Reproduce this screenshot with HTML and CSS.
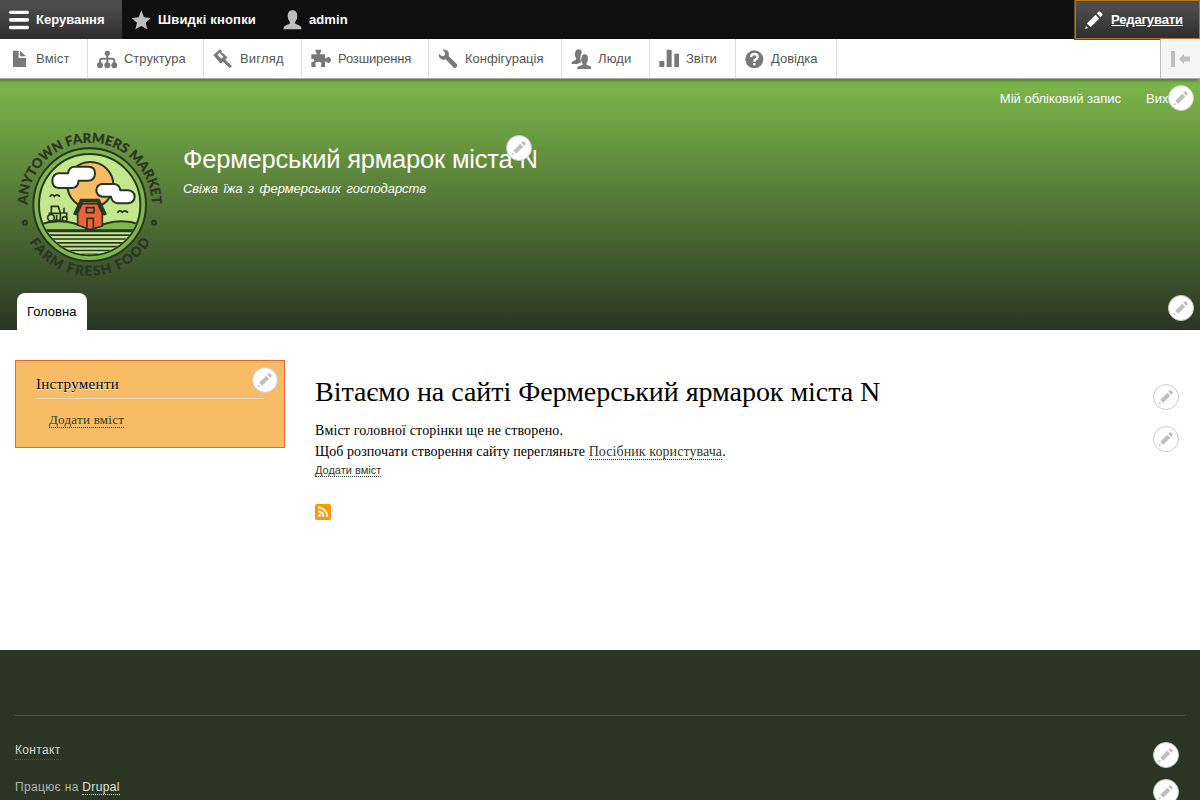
FILE: index.html
```
<!DOCTYPE html>
<html lang="uk">
<head>
<meta charset="utf-8">
<title>Фермерський ярмарок міста N</title>
<link rel="stylesheet" href="styles.css">
</head>
<body>
<svg class="defs" width="0" height="0">
  <symbol id="pencil" viewBox="0 0 16 16">
    <path d="M14.545 3.042l-1.586-1.585c-.389-.389-1.025-.389-1.414 0l-1.293 1.293 3 3 1.293-1.293c.389-.389.389-1.026 0-1.415z"/>
    <rect x="5.129" y="3.8" transform="matrix(-.707 -.707 .707 -.707 6.189 20.064)" width="4.243" height="9.899"/>
    <path d="M.908 14.775c-.087.262.055.397.316.312l2.001-.667-1.65-1.646-.667 2.001z"/>
  </symbol>
</svg>

<div class="toolbar">
  <nav class="bar">
    <a class="tab active"><svg class="icon" viewBox="0 0 60 60"><path d="M4 2H56Q60 2 60 7Q60 12 56 12H4Q0 12 0 7Q0 2 4 2ZM4 24H56Q60 24 60 29Q60 35 56 35H4Q0 35 0 29Q0 24 4 24ZM4 47H56Q60 47 60 52Q60 58 56 58H4Q0 58 0 52Q0 47 4 47Z"/></svg>Керування</a>
    <a class="tab shortcuts"><svg class="icon gray" viewBox="0 0 60 60"><path d="M31 1L39 22L59 24L44 38L49 58L31 48L13 58L18 38L2 24L23 22Z"/></svg>Швидкі кнопки</a>
    <a class="tab user"><svg class="icon gray" viewBox="0 0 60 60"><path d="M4 58Q4 49 12 46L23 41Q25 37 22 33Q17 27 17 18Q17 1 31 1Q46 1 46 18Q46 27 41 33Q38 37 40 41L51 46Q59 49 59 58Z"/></svg>admin</a>
    <a class="tab edit active"><svg class="icon" viewBox="0 0 16 16"><use href="#pencil"/></svg>Редагувати</a>
  </nav>
  <nav class="tray">
    <a class="item w-content"><svg class="icon" viewBox="0 0 60 60"><path d="M12 5H29V27H51V54H12ZM33 5L51 22H33Z"/></svg>Вміст</a>
    <a class="item w-structure"><svg class="icon" viewBox="0 0 60 60"><circle cx="31" cy="13" r="8"/><circle cx="9" cy="49" r="9"/><circle cx="31" cy="49" r="9"/><circle cx="52" cy="49" r="9"/><path class="line" d="M31 13V48M9 48V35Q9 29 15 29H46Q52 29 52 35V48"/></svg>Структура</a>
    <a class="item w-appearance"><svg class="icon" viewBox="0 0 60 60"><path fill-rule="evenodd" d="M1 18L21 1L27 7L24 11L30 13L43 25L37 32L57 51L50 58L30 38L23 44ZM13 17L25 29L31 23L19 11Z"/></svg>Вигляд</a>
    <a class="item w-extend"><svg class="icon" viewBox="0 0 60 60"><path d="M1 16H17V12Q12 9 14 2H30Q32 9 27 12V16H42V28H47Q49 23 54 24Q60 26 60 33Q60 41 54 42Q49 43 47 38H42V54H30V49Q34 44 28 39H16Q10 44 14 49V54H1V39Q10 40 10 34Q9 29 1 30Z"/></svg>Розширення</a>
    <a class="item w-config"><svg class="icon" viewBox="0 0 60 60"><path d="M14 2Q25 0 31 8Q34 14 32 21L57 46Q59 50 56 54Q52 58 47 56L23 31Q15 34 8 29Q1 23 2 14L12 22L19 20L22 12Z"/></svg>Конфігурація</a>
    <a class="item w-people"><svg class="icon" viewBox="0 0 60 60"><path d="M1 45Q1 37 8 35L15 32Q17 29 14 25Q11 20 12 14Q13 1 23 1Q32 1 32 12Q27 18 28 28Q28 34 31 39L24 43Q21 44 20 45Z"/><path d="M18 60Q18 53 25 51L34 48Q36 45 33 41Q30 36 31 29Q32 16 41 16Q51 16 51 29Q51 36 47 42Q45 46 48 48L56 51Q61 53 61 60Z"/></svg>Люди</a>
    <a class="item w-reports"><svg class="icon" viewBox="0 0 60 60"><path d="M1 36H16V54H1ZM23 2H38V54H23ZM46 14H60V54H46Z"/></svg>Звіти</a>
    <a class="item w-help"><svg class="icon" viewBox="0 0 60 60"><circle cx="28" cy="31" r="27"/><path class="query" d="M18 24Q19 15 28 15Q38 15 38 23Q38 28 32 31Q28 33 28 38M28 42V49"/></svg>Довідка</a>
    <span class="toggle"><svg viewBox="0 0 20 20"><path d="M1 2H5V18H1ZM9 10L14 5V7.5H20V12.5H14V15Z"/></svg></span>
  </nav>
</div>

<header class="header">
  <nav class="account"><a>Мій обліковий запис</a><a>Вихід</a></nav>
  <span class="pen pen-account"><svg><use href="#pencil"/></svg></span>
  <div class="branding">
    <svg class="logo" viewBox="0 0 480 480">
      <defs>
        <clipPath id="disc"><circle cx="239" cy="239" r="150"/></clipPath>
        <path id="arcTop" d="M52 240A187 187 0 0 1 426 240"/>
        <path id="arcBottom" d="M26 239A213 213 0 0 0 452 239"/>
      </defs>
      <circle cx="239" cy="239" r="169" fill="#7db84a" stroke="#2a3524" stroke-width="6"/>
      <circle cx="239" cy="239" r="152" fill="#c2e88b" stroke="#2a3524" stroke-width="6"/>
      <g clip-path="url(#disc)" stroke="#2a3524" stroke-width="6">
        <circle cx="241" cy="180" r="69" fill="#f8bc64"/>
        <rect x="80" y="316" width="320" height="80" fill="#c2e88b"/>
        <path fill="#9ccd66" d="M80 302Q162 270 241 316H80Z"/>
        <path fill="#7db84a" d="M400 302Q320 270 241 316H400Z"/>
        <path d="M80 319H400M80 330.500H400M80 342H400M80 353.500H400M80 365H400M80 376.500H400M80 388H400" stroke-width="5"/>
      </g>
      <g fill="#fff" stroke="#2a3524" stroke-width="6">
        <path d="M146 145H174Q177 125 194 125H236Q255 126 255 145Q254 166 235 167H206Q204 188 187 189H146Q127 187 127 167Q128 147 146 145Z"/>
        <path d="M276 177H313Q329 179 331 196H355Q373 198 374 215Q373 233 354 235H322Q306 232 303 215H278Q260 213 259 196Q260 179 276 177Z"/>
      </g>
      <g stroke="#2a3524" stroke-width="5">
        <path fill="#eb6437" d="M203 265L216 236H263L277 265V303L241 314L203 300Z"/>
        <path fill="none" stroke-width="11" d="M194 270L214 227H265L286 270"/>
        <path fill="#eb6437" d="M229 248H252V263H229ZM231 308V280H250V308"/>
        <path fill="none" d="M121 216V213Q127 206 133 214Q140 206 148 213V216M324 264V261Q330 254 337 262Q344 254 352 261V264"/>
        <g fill="none"><circle cx="123" cy="278" r="10"/><circle cx="164" cy="282" r="7"/><path d="M124 264V244H145L151 264V286H132M151 264H170V277M162 262V248M140 270V284M116 265H150"/></g>
      </g>
      <g fill="none" stroke="#2a3524" stroke-width="6"><circle cx="45" cy="293" r="6"/><circle cx="432" cy="293" r="6"/></g>
      <g class="logo-text">
        <text textLength="584"><textPath href="#arcTop" startOffset="1" textLength="584">ANYTOWN FARMERS MARKET</textPath></text>
        <text textLength="434"><textPath href="#arcBottom" startOffset="118" textLength="434">FARM FRESH FOOD</textPath></text>
      </g>
    </svg>
    <div class="names">
      <div class="site-name">Фермерський ярмарок міста N</div>
      <div class="slogan">Свіжа їжа з фермерських господарств</div>
    </div>
    <span class="pen pen-brand"><svg><use href="#pencil"/></svg></span>
  </div>
  <nav class="menu"><a>Головна</a></nav>
  <span class="pen pen-menu"><svg><use href="#pencil"/></svg></span>
</header>

<div class="main">
  <aside class="block">
    <h2>Інструменти</h2>
    <a class="link">Додати вміст</a>
    <span class="pen pen-block"><svg><use href="#pencil"/></svg></span>
  </aside>
  <main class="content">
    <h1>Вітаємо на сайті Фермерський ярмарок міста N</h1>
    <p>Вміст головної сторінки ще не створено.<br><span class="hint">Щоб розпочати створення сайту перегляньте <a class="link">Посібник користувача</a>.</span></p>
    <div class="add"><a class="link">Додати вміст</a></div>
    <svg class="feed" viewBox="0 0 16 16"><rect width="16" height="16" rx="2" fill="#ff9900"/><circle cx="4.500" cy="11.500" r="1.500" fill="#fff"/><path d="M3 7.400A5.600 5.600 0 0 1 8.600 13M3 3.600A9.400 9.400 0 0 1 12.400 13" fill="none" stroke="#fff" stroke-width="2"/></svg>
    <span class="pen pen-title"><svg><use href="#pencil"/></svg></span>
    <span class="pen pen-body"><svg><use href="#pencil"/></svg></span>
  </main>
</div>

<footer class="footer">
  <div class="footer-inner">
    <div class="row contact"><a>Контакт</a><span class="pen"><svg><use href="#pencil"/></svg></span></div>
    <div class="row powered"><span>Працює на <a>Drupal</a></span><span class="pen"><svg><use href="#pencil"/></svg></span></div>
  </div>
</footer>
</body>
</html>
```
FILE: styles.css
```
* { box-sizing: border-box; }
body {
  margin: 0;
  height: 800px;
  overflow: hidden;
  background: #fff;
  font: 14px/21px "Liberation Serif", serif;
  color: #000;
}
.defs { position: absolute; }

/* Admin toolbar */
.toolbar {
  position: relative;
  z-index: 2;
  font: 13px/39px "Liberation Sans", sans-serif;
}
.bar { display: flex; height: 39px; background: #0f0f0f; }
.tab, .item { display: flex; align-items: center; white-space: nowrap; }
.icon { width: 20px; height: 20px; margin: 0 7.33px 0 8.67px; flex: none; }
.tab { width: 122px; color: #fff; font-weight: bold; fill: #fff; }
.tab.active { background: linear-gradient(rgba(255,255,255,.25) 20%, rgba(255,255,255,.125) 100%); }
.tab .gray { fill: #bebebe; }
.tab.shortcuts { width: 151px; letter-spacing: .18px; }
.tab.user { width: 93px; letter-spacing: .1px; }
.tab.edit { width: 125px; margin-left: auto; letter-spacing: -.12px; text-decoration: underline; outline: 1px solid #b8781a; outline-offset: -1px; box-shadow: 0 0 0 1px #6b4a14; }
.tray {
  display: flex;
  height: 40px;
  background: #fff;
  border-bottom: 1px solid #aaa;
  box-shadow: -2px 1px 3px 1px rgba(0,0,0,.3333);
  color: #565656;
}
.item { border-right: 1px solid #ddd; fill: #787878; }
.w-content { width: 88px; letter-spacing: .15px; }
.w-structure { width: 116px; }
.w-appearance { width: 98px; letter-spacing: .18px; }
.w-extend { width: 127px; letter-spacing: -.15px; }
.w-config { width: 133px; }
.w-people { width: 88px; letter-spacing: .15px; }
.w-reports { width: 86px; }
.w-help { width: 101px; letter-spacing: -.05px; }
.w-help .icon { margin-right: 6.4px; }
.item .line { fill: none; stroke: #787878; stroke-width: 6; }
.item .query { fill: none; stroke: #fff; stroke-width: 7; }
.toggle {
  display: flex;
  align-items: center;
  justify-content: center;
  width: 40px;
  margin-left: auto;
  padding-right: 2px;
  background: #f5f5f5;
  border-left: 1px solid #bbb;
}
.toggle svg { width: 20px; height: 20px; fill: #bebebe; }

/* Contextual edit buttons */
.pen {
  position: absolute;
  display: flex;
  align-items: center;
  justify-content: center;
  width: 26px;
  height: 26px;
  border: 1px solid #ccc;
  border-radius: 13px;
  background: #fff;
  fill: #bebebe;
}
.pen svg { width: 16px; height: 16px; }

/* Header */
.header {
  position: relative;
  display: flex;
  flex-direction: column;
  height: 251px;
  background: linear-gradient(#7db84a, #2a3524);
  color: #fffeff;
  font-family: "Liberation Sans", sans-serif;
}
.account { display: flex; justify-content: flex-end; gap: 25px; padding: 9px 21px 0 0; font-size: 13px; }
.branding { position: relative; display: flex; padding: 16px 0 0 10px; height: 184px; }
.logo { width: 160px; height: 160px; flex: none; }
.logo-text { font: 900 40px Lato, sans-serif; fill: #2a3524; stroke: #2a3524; stroke-width: .8; }
.names { padding: 16px 0 0 13px; white-space: nowrap; }
.site-name { font-size: 25.5px; line-height: 37px; letter-spacing: -.19px; }
.slogan { font-size: 13px; font-style: italic; word-spacing: 2px; letter-spacing: -.05px; }
.menu { display: flex; padding-left: 17px; }
.menu a {
  height: 37px;
  padding: 0 10.4px 0 10px;
  border-radius: 8px 8px 0 0;
  background: #fff;
  color: #000;
  font-size: 13px;
  line-height: 37px;
}
.pen-account { right: 6px; top: 6px; }
.pen-brand { left: 506px; top: 26px; }
.pen-menu { right: 6px; top: 216px; }

/* Main area */
.main { display: flex; gap: 30px; height: 320px; padding: 30px 15px 0; }
.block {
  position: relative;
  width: 270px;
  height: 88px;
  padding: 13px 20px;
  background: #f8bc64;
  border: 1px solid #eb6437;
}
.block h2 {
  margin: 0 0 10px;
  padding-bottom: 4px;
  border-bottom: 1px solid #d6d6d6;
  font: 15px/20px "Liberation Serif", serif;
  letter-spacing: .3px;
  text-shadow: 0 1px 0 #fff;
}
.link { color: #2f3b27; border-bottom: 1px dotted; }
.block .link { display: inline-block; margin-left: 13px; font-size: 13px; line-height: 14px; letter-spacing: .25px; }
.content { position: relative; flex: 1; }
.content h1 { margin: 15px 0 11px; font: 28px/34px "Liberation Serif", serif; letter-spacing: -.04px; }
.content p { margin: 0; font-size: 14px; letter-spacing: .14px; }
.hint { letter-spacing: .075px; }
.add { font: 11px/16px "Liberation Sans", sans-serif; }
.feed { display: block; width: 16px; height: 16px; margin-top: 26px; }
.pen-block { right: 6px; top: 6px; }
.pen-title { right: 6px; top: 24px; }
.pen-body { right: 6px; top: 66px; }

/* Footer */
.footer {
  height: 150px;
  padding: 65px 15px 0;
  background: #2a3524;
  font: 12px/18px "Liberation Sans", sans-serif;
  letter-spacing: .34px;
  color: #b0b5ad;
}
.footer-inner { border-top: 1px solid #555; padding-top: 25px; }
.row { position: relative; height: 37px; }
.row a { display: inline-block; color: #d4d7d3; border-bottom: 1px dotted #555d50; }
.row.powered a { color: #e0e2df; border-color: #fff; line-height: 14px; }
.row .pen { right: 6px; top: 1px; }
```
